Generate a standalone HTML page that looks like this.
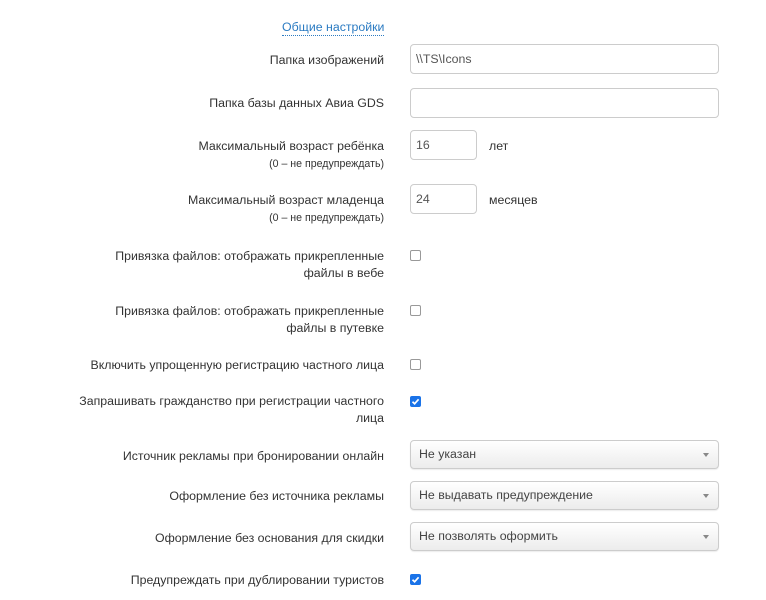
<!DOCTYPE html>
<html><head><meta charset="utf-8"><style>
body{margin:0;width:766px;height:600px;background:#fff;font-family:"Liberation Sans",Arial,sans-serif;font-size:12.35px;color:#333;position:relative;overflow:hidden}
.l{position:absolute;right:382px;text-align:right;line-height:17px;white-space:nowrap}
.s{font-size:10.6px;color:#333}
.i{position:absolute;left:410px;border:1px solid #ccc;border-radius:4px;box-sizing:border-box;height:30px;line-height:28px;padding-left:5px;color:#555;background:#fff}
.sel{position:absolute;left:410px;width:309px;height:29px;border:1px solid #ccc;border-radius:4px;box-sizing:border-box;background:linear-gradient(#fff,#ececec);box-shadow:0 1px 1px rgba(0,0,0,.08);line-height:27px;padding-left:8px;color:#444}
.sel:after{content:"";position:absolute;right:9px;top:12px;border-left:3.5px solid transparent;border-right:3.5px solid transparent;border-top:4px solid #888}
.c{position:absolute;left:410px;width:11px;height:11px;border:1px solid #999;border-radius:2px;box-sizing:border-box;background:#fff}
.k{position:absolute;left:410px;width:11px;height:11px;border-radius:2px;background:#1a73e8}
.k svg{position:absolute;left:0;top:0}
.t{position:absolute;line-height:17px}
</style></head><body>
<div class="t" style="left:282px;top:19px;color:#2b7bc2;border-bottom:1px dotted #2b7bc2;line-height:16px">Общие настройки</div>

<div class="l" style="top:52px">Папка изображений</div>
<div class="i" style="top:44px;width:309px">\\TS\Icons</div>

<div class="l" style="top:95px">Папка базы данных Авиа GDS</div>
<div class="i" style="top:88px;width:309px"></div>

<div class="l" style="top:138px">Максимальный возраст ребёнка<br><span class="s">(0 – не предупреждать)</span></div>
<div class="i" style="top:130px;width:67px">16</div>
<div class="t" style="left:489px;top:138px">лет</div>

<div class="l" style="top:192px">Максимальный возраст младенца<br><span class="s">(0 – не предупреждать)</span></div>
<div class="i" style="top:184px;width:67px">24</div>
<div class="t" style="left:489px;top:192px">месяцев</div>

<div class="l" style="top:248px">Привязка файлов: отображать прикрепленные<br>файлы в вебе</div>
<div class="c" style="top:250px"></div>

<div class="l" style="top:303px">Привязка файлов: отображать прикрепленные<br>файлы в путевке</div>
<div class="c" style="top:305px"></div>

<div class="l" style="top:357px">Включить упрощенную регистрацию частного лица</div>
<div class="c" style="top:359px"></div>

<div class="l" style="top:393px">Запрашивать гражданство при регистрации частного<br>лица</div>
<div class="k" style="top:396px"><svg width="11" height="11"><path d="M2.5 5.8 L4.6 7.8 L8.6 3.3" stroke="#fff" stroke-width="1.7" fill="none"/></svg></div>

<div class="l" style="top:448px">Источник рекламы при бронировании онлайн</div>
<div class="sel" style="top:440px">Не указан</div>

<div class="l" style="top:488px">Оформление без источника рекламы</div>
<div class="sel" style="top:481px">Не выдавать предупреждение</div>

<div class="l" style="top:530px">Оформление без основания для скидки</div>
<div class="sel" style="top:522px">Не позволять оформить</div>

<div class="l" style="top:572px">Предупреждать при дублировании туристов</div>
<div class="k" style="top:574px"><svg width="11" height="11"><path d="M2.5 5.8 L4.6 7.8 L8.6 3.3" stroke="#fff" stroke-width="1.7" fill="none"/></svg></div>
</body></html>
